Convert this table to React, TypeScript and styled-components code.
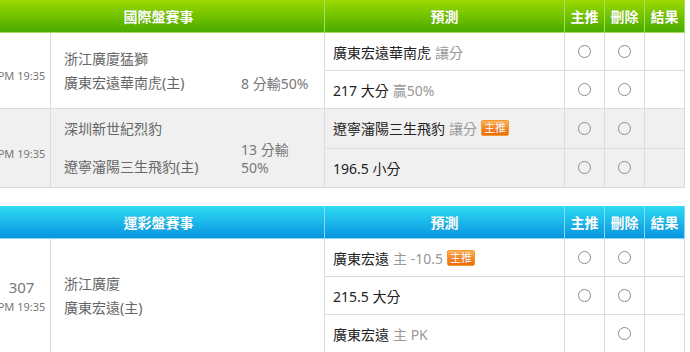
import React from "react";
import styled, { createGlobalStyle, css } from "styled-components";

const GlobalStyle = createGlobalStyle`
  html, body { margin: 0; padding: 0; background: #fff; }
  body {
    font-family: "Noto Sans", "Noto Sans CJK TC", sans-serif;
    overflow: hidden;
    width: 690px;
    height: 352px;
  }
`;

const Page = styled.div`
  width: 690px;
  overflow: hidden;
  display: flex;
  flex-direction: column;
  gap: 18px;
`;

const Table = styled.div`
  width: 692px;
  margin-left: -7px;
  display: flex;
  flex-direction: column;
`;

type Variant = "green" | "blue";

const headerTheme = {
  green: { bg: "linear-gradient(#9cd900, #49ab00)", line: "#a4de5c" },
  blue: { bg: "linear-gradient(#30dbf3, #0894e0)", line: "#82dbf6" },
};

const HeaderRow = styled.div<{ $variant: Variant }>`
  display: grid;
  grid-template-columns: 332px 240px 40px 40px 40px;
  height: 32px;
  background: ${(p) => headerTheme[p.$variant].bg};
  border-bottom: 1px solid ${(p) => headerTheme[p.$variant].line};
  & > * { border-right: 1px solid ${(p) => headerTheme[p.$variant].line}; }
`;

const HeaderCell = styled.div`
  display: flex;
  align-items: center;
  justify-content: center;
  color: #fff;
  font-size: 14px;
  font-weight: bold;
  text-shadow: 0 0 1px rgba(0, 0, 0, 0.15);
`;

const BodyRow = styled.div<{ $shaded?: boolean }>`
  display: grid;
  grid-template-columns: 58px 274px 360px;
  border-bottom: 1px solid #dcdcdc;
  background: ${(p) => (p.$shaded ? "#f0f0f0" : "#fff")};
`;

const TimeCell = styled.div`
  border-right: 1px solid #dcdcdc;
  display: flex;
  flex-direction: column;
  align-items: center;
  justify-content: center;
  color: #777;
  white-space: nowrap;
`;

const GameNo = styled.div`
  font-size: 15px;
  line-height: 22px;
  min-height: 11px;
`;

const GameTime = styled.div`
  font-size: 11px;
  line-height: 18px;
`;

const MatchCell = styled.div`
  border-right: 1px solid #dcdcdc;
  padding: 8px 13px;
  display: grid;
  grid-template-columns: 1fr 70px;
  align-content: center;
  align-items: end;
  color: #666;
  font-size: 14px;
`;

const Team = styled.div`
  line-height: 24px;
  white-space: nowrap;
`;

const Score = styled.div`
  line-height: 18px;
  color: #777;
  padding-bottom: 2px;
`;

const PredList = styled.div`
  display: flex;
  flex-direction: column;
`;

const PredRow = styled.div`
  flex: 1;
  min-height: 37px;
  display: grid;
  grid-template-columns: 240px 40px 40px 40px;
  border-bottom: 1px solid #dcdcdc;
  &:last-child { border-bottom: none; }
  & > * { border-right: 1px solid #dcdcdc; }
`;

const PredCell = styled.div`
  display: flex;
  align-items: center;
  padding-left: 8px;
  font-size: 14px;
  color: #222;
  white-space: nowrap;
`;

const Muted = styled.span`
  color: #999;
  margin-left: 4px;
`;

const Badge = styled.span`
  display: inline-flex;
  align-items: center;
  justify-content: center;
  width: 26px;
  height: 14px;
  margin-left: 4px;
  border: 1px solid #f29a2e;
  border-radius: 2px;
  background: linear-gradient(#ffb45a, #f58420 55%, #ee6d0c);
  color: #fff;
  font-size: 11px;
  line-height: 14px;
  text-shadow: 0 0 1px rgba(120, 40, 0, 0.4);
`;

const RadioCell = styled.div`
  display: flex;
  align-items: center;
  justify-content: center;
`;

const Radio = styled.span<{ $hidden?: boolean }>`
  width: 11px;
  height: 11px;
  border-radius: 50%;
  border: 1px solid #8c8c8c;
  ${(p) =>
    p.$hidden &&
    css`
      visibility: hidden;
    `}
`;

type Pred = {
  main: string;
  muted?: string;
  badge?: boolean;
  noPick?: boolean;
};

type Game = {
  no?: string;
  time: string;
  home: string;
  away: string;
  score?: string;
  shaded?: boolean;
  preds: Pred[];
};

const PredLine: React.FC<{ p: Pred }> = ({ p }) => (
  <PredRow>
    <PredCell>
      {p.main}
      {p.muted && <Muted>{p.muted}</Muted>}
      {p.badge && <Badge>主推</Badge>}
    </PredCell>
    <RadioCell>
      <Radio $hidden={p.noPick} />
    </RadioCell>
    <RadioCell>
      <Radio />
    </RadioCell>
    <RadioCell />
  </PredRow>
);

const GameRow: React.FC<{ g: Game }> = ({ g }) => (
  <BodyRow $shaded={g.shaded}>
    <TimeCell>
      <GameNo>{g.no}</GameNo>
      <GameTime>{g.time}</GameTime>
    </TimeCell>
    <MatchCell>
      <Team>{g.home}</Team>
      <span />
      <Team>{g.away}</Team>
      <Score>{g.score}</Score>
    </MatchCell>
    <PredList>
      {g.preds.map((p, i) => (
        <PredLine key={i} p={p} />
      ))}
    </PredList>
  </BodyRow>
);

const Section: React.FC<{ variant: Variant; title: string; games: Game[] }> = ({
  variant,
  title,
  games,
}) => (
  <Table>
    <HeaderRow $variant={variant}>
      <HeaderCell>{title}</HeaderCell>
      <HeaderCell>預測</HeaderCell>
      <HeaderCell>主推</HeaderCell>
      <HeaderCell>刪除</HeaderCell>
      <HeaderCell>結果</HeaderCell>
    </HeaderRow>
    {games.map((g, i) => (
      <GameRow key={i} g={g} />
    ))}
  </Table>
);

const intl: Game[] = [
  {
    time: "PM 19:35",
    home: "浙江廣廈猛獅",
    away: "廣東宏遠華南虎(主)",
    score: "8 分輸50%",
    preds: [
      { main: "廣東宏遠華南虎", muted: "讓分" },
      { main: "217 大分", muted: "贏50%" },
    ],
  },
  {
    time: "PM 19:35",
    home: "深圳新世紀烈豹",
    away: "遼寧瀋陽三生飛豹(主)",
    score: "13 分輸50%",
    shaded: true,
    preds: [
      { main: "遼寧瀋陽三生飛豹", muted: "讓分", badge: true },
      { main: "196.5 小分" },
    ],
  },
];

const sport: Game[] = [
  {
    no: "307",
    time: "PM 19:35",
    home: "浙江廣廈",
    away: "廣東宏遠(主)",
    preds: [
      { main: "廣東宏遠", muted: "主 -10.5", badge: true },
      { main: "215.5 大分" },
      { main: "廣東宏遠", muted: "主 PK", noPick: true },
    ],
  },
];

export default function App() {
  return (
    <>
      <GlobalStyle />
      <Page>
        <Section variant="green" title="國際盤賽事" games={intl} />
        <Section variant="blue" title="運彩盤賽事" games={sport} />
      </Page>
    </>
  );
}
